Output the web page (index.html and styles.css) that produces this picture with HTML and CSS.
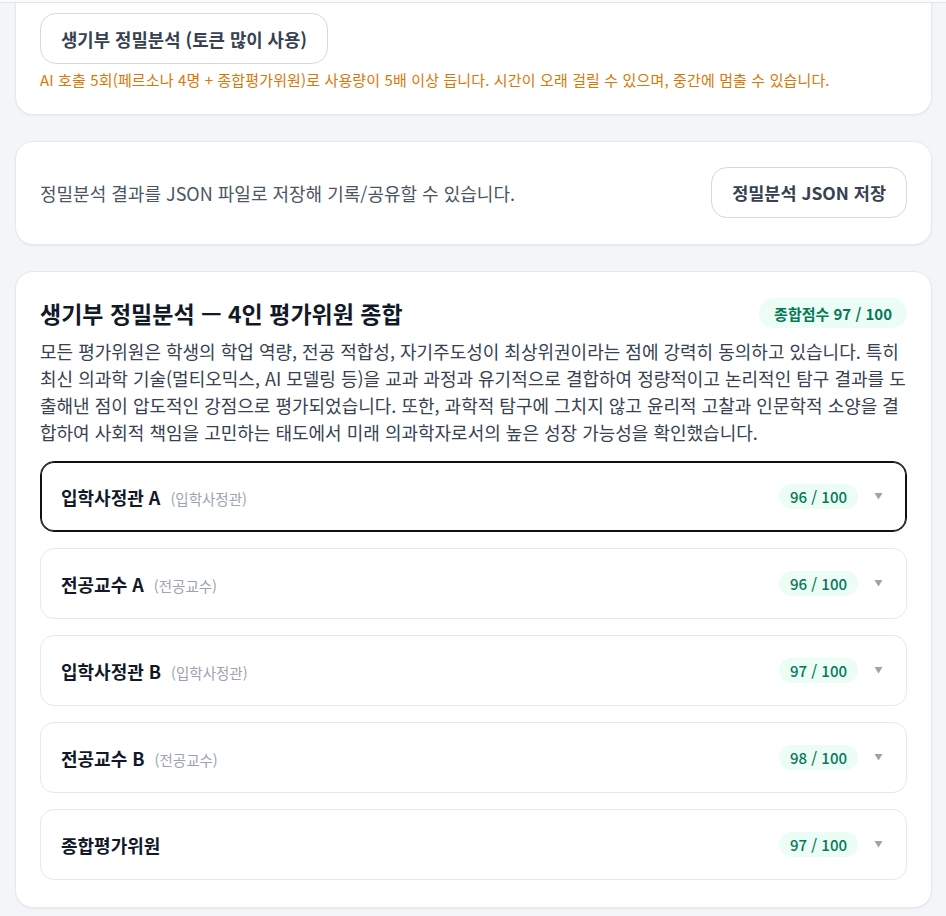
FILE: index.html
```html
<!DOCTYPE html>
<html lang="ko">
<head>
<meta charset="utf-8">
<title>생기부 정밀분석</title>
<link rel="stylesheet" href="styles.css">
</head>
<body>
<div class="topbar"></div>
<main class="page">
  <section class="card card-cut">
    <button class="btn">생기부 정밀분석 (토큰 많이 사용)</button>
    <p class="warn">AI 호출 5회(페르소나 4명 + 종합평가위원)로 사용량이 5배 이상 듭니다. 시간이 오래 걸릴 수 있으며, 중간에 멈출 수 있습니다.</p>
  </section>

  <section class="card card-row">
    <p class="save-text">정밀분석 결과를 JSON 파일로 저장해 기록/공유할 수 있습니다.</p>
    <button class="btn btn-save">정밀분석 JSON 저장</button>
  </section>

  <section class="card card-summary">
    <div class="summary-head">
      <h2 class="summary-title">생기부 정밀분석 — 4인 평가위원 종합</h2>
      <span class="badge">종합점수 97 / 100</span>
    </div>
    <p class="summary-text">모든 평가위원은 학생의 학업 역량, 전공 적합성, 자기주도성이 최상위권이라는 점에 강력히 동의하고 있습니다. 특히 최신 의과학 기술(멀티오믹스, AI 모델링 등)을 교과 과정과 유기적으로 결합하여 정량적이고 논리적인 탐구 결과를 도출해낸 점이 압도적인 강점으로 평가되었습니다. 또한, 과학적 탐구에 그치지 않고 윤리적 고찰과 인문학적 소양을 결합하여 사회적 책임을 고민하는 태도에서 미래 의과학자로서의 높은 성장 가능성을 확인했습니다.</p>
    <div class="items">
      <div class="item item-focus">
        <div class="item-name"><strong>입학사정관 A</strong><span class="role">(입학사정관)</span></div>
        <div class="item-right"><span class="pill">96 / 100</span><svg class="caret" width="9" height="7" viewBox="0 0 9 7"><polygon points="0.5,0 8.5,0 4.5,6.5" fill="#9ca3af"/></svg></div>
      </div>
      <div class="item">
        <div class="item-name"><strong>전공교수 A</strong><span class="role">(전공교수)</span></div>
        <div class="item-right"><span class="pill">96 / 100</span><svg class="caret" width="9" height="7" viewBox="0 0 9 7"><polygon points="0.5,0 8.5,0 4.5,6.5" fill="#9ca3af"/></svg></div>
      </div>
      <div class="item">
        <div class="item-name"><strong>입학사정관 B</strong><span class="role">(입학사정관)</span></div>
        <div class="item-right"><span class="pill">97 / 100</span><svg class="caret" width="9" height="7" viewBox="0 0 9 7"><polygon points="0.5,0 8.5,0 4.5,6.5" fill="#9ca3af"/></svg></div>
      </div>
      <div class="item">
        <div class="item-name"><strong>전공교수 B</strong><span class="role">(전공교수)</span></div>
        <div class="item-right"><span class="pill">98 / 100</span><svg class="caret" width="9" height="7" viewBox="0 0 9 7"><polygon points="0.5,0 8.5,0 4.5,6.5" fill="#9ca3af"/></svg></div>
      </div>
      <div class="item">
        <div class="item-name"><strong>종합평가위원</strong></div>
        <div class="item-right"><span class="pill">97 / 100</span><svg class="caret" width="9" height="7" viewBox="0 0 9 7"><polygon points="0.5,0 8.5,0 4.5,6.5" fill="#9ca3af"/></svg></div>
      </div>
    </div>
  </section>
</main>
</body>
</html>
```

FILE: styles.css
```css
* { box-sizing: border-box; }

html, body {
  margin: 0;
  padding: 0;
  background: #f4f5f9;
  font-family: "Noto Sans CJK KR", "Noto Sans", sans-serif;
  color: #1f2937;
}

.topbar {
  height: 3px;
  background: #fbfbfc;
  border-bottom: 1px solid #e3e5e9;
}

.page {
  display: flex;
  flex-direction: column;
  gap: 26px;
  padding: 0 14px 40px 15px;
}

.card {
  background: #fff;
  border: 1px solid #e6e8ec;
  border-radius: 18px;
  box-shadow: 0 1px 2px rgba(16, 24, 40, 0.05);
}

.card-cut {
  border-top: none;
  border-radius: 0 0 18px 18px;
  padding: 10px 24px 24px;
}

.btn {
  display: inline-flex;
  align-items: center;
  justify-content: center;
  height: 51px;
  padding: 0 20px;
  background: #fff;
  border: 1px solid #d5d8de;
  border-radius: 16px;
  font-family: inherit;
  font-size: 17.8px;
  font-weight: 700;
  color: #374151;
}

.btn-save {
  font-size: 17.5px;
}

.warn {
  margin: 6px 0 0;
  font-size: 15px;
  line-height: 20px;
  letter-spacing: 0.13px;
  color: #d97706;
}

.card-row {
  display: flex;
  align-items: center;
  justify-content: space-between;
  padding: 25px 24px 26px;
}

.save-text {
  margin: 0;
  font-size: 18px;
  color: #4b5563;
}

.card-summary {
  padding: 26px 24px 27px;
}

.summary-head {
  display: flex;
  align-items: center;
  justify-content: space-between;
  height: 30px;
}

.summary-title {
  margin: 0;
  font-size: 23px;
  font-weight: 700;
  color: #111827;
}

.badge {
  height: 30px;
  display: inline-flex;
  align-items: center;
  padding: 0 15px;
  border-radius: 15px;
  background: #ecfdf5;
  color: #047857;
  font-size: 15px;
  font-weight: 700;
}

.summary-text {
  margin: 10px 0 15px;
  font-size: 18px;
  line-height: 27px;
  color: #374151;
}

.items {
  display: flex;
  flex-direction: column;
  gap: 16px;
}

.item {
  height: 71px;
  display: flex;
  align-items: center;
  justify-content: space-between;
  padding: 0 23px 0 20px;
  border: 1px solid #e6e8ec;
  border-radius: 14px;
  background: #fff;
}

.item-focus {
  border-color: #111;
  box-shadow: inset 0 0 0 1px #111;
}

.item-name {
  display: flex;
  align-items: baseline;
  gap: 10px;
}

.item-name strong {
  font-size: 18px;
  font-weight: 700;
  color: #111827;
}

.role {
  font-size: 14.5px;
  color: #9ca3af;
}

.item-right {
  display: flex;
  align-items: center;
  gap: 16px;
}

.pill {
  height: 25px;
  display: inline-flex;
  align-items: center;
  padding: 0 11px;
  border-radius: 13px;
  background: #ecfdf5;
  color: #047857;
  font-size: 15px;
  font-weight: 500;
}

.caret {
  display: block;
}
```
